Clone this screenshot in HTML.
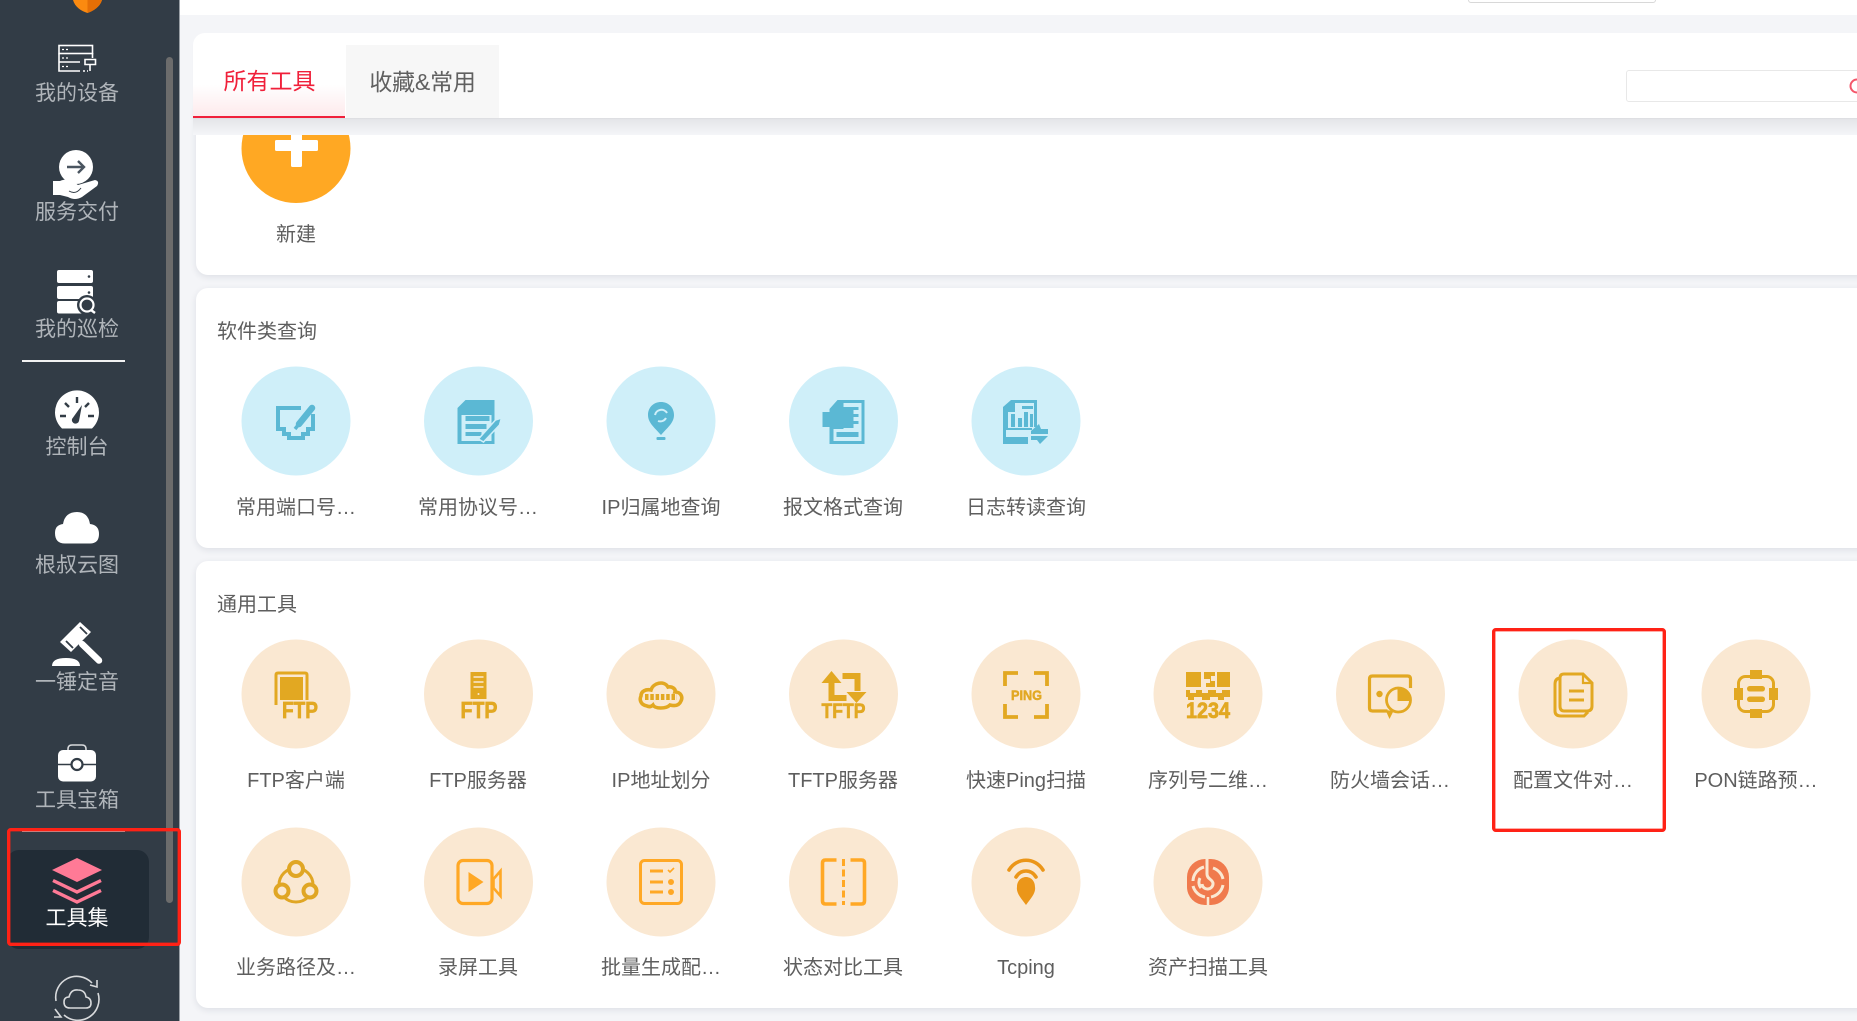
<!DOCTYPE html>
<html lang="zh"><head><meta charset="utf-8"><title>工具集</title>
<style>
html,body{margin:0;padding:0;width:1857px;height:1021px;overflow:hidden;background:#f4f5f8}
body{position:relative;font-family:"Liberation Sans","Noto Sans CJK SC",sans-serif;color:#595959}
div{position:absolute;box-sizing:border-box}
.side{left:0;top:0;width:180px;height:1021px;background:#323c46;border-right:1px solid #9aa0a6}
.card{left:196px;width:1700px;background:#fff;border-radius:12px;box-shadow:0 2px 7px rgba(30,40,70,.10)}
.l{width:182px;text-align:center;font-size:20px;line-height:30px;height:30px;white-space:nowrap;color:#5e5e5e;font-weight:400}
.s{width:150px;left:2px;text-align:center;font-size:21px;line-height:30px;height:30px;color:#b0b5ba;font-weight:400;white-space:nowrap}
.t{font-size:20px;line-height:30px;height:30px;left:217px;color:#5e5e5e;font-weight:400;white-space:nowrap}
svg{position:absolute;left:0;top:0}
svg text{font-family:"Liberation Sans",sans-serif;font-weight:700}
</style></head><body>

<div style="left:180px;top:0;width:1677px;height:15px;background:#fff"></div>
<div style="left:1468px;top:-10px;width:188px;height:13px;background:#fff;border:1px solid #d8d8d8;border-radius:3px"></div>

<!-- cards -->
<div class="card" style="top:100px;height:175px"></div>
<div class="card" style="top:288px;height:260px"></div>
<div class="card" style="top:561px;height:447px"></div>

<!-- tab header -->
<div style="left:193px;top:118px;width:1664px;height:17px;background:linear-gradient(#e3e4e8,#f4f5f8)"></div>
<div style="left:193px;top:33px;width:1700px;height:85px;background:#fff;border-radius:12px 0 0 0;box-shadow:0 1px 1px rgba(0,0,0,.03)"></div>
<div style="left:193px;top:85px;width:152px;height:33px;background:linear-gradient(#fff,#fdeaec);border-bottom:2px solid #f0203a"></div>
<div style="left:346px;top:45px;width:153px;height:73px;background:#f7f7f7"></div>
<div style="left:193px;top:63px;width:153px;text-align:center;font-size:23px;line-height:36px;color:#f0203a;font-weight:400;white-space:nowrap">所有工具</div>
<div style="left:346px;top:64px;width:153px;text-align:center;font-size:23px;line-height:36px;color:#606060;font-weight:400;white-space:nowrap;letter-spacing:-.2px">收藏&amp;常用</div>
<div style="left:1626px;top:70px;width:260px;height:32px;border:1.5px solid #e8e8e8;border-radius:3px;background:#fff"></div>

<div class="side"></div>
<div style="left:166px;top:57px;width:7px;height:846px;background:#6c6c6c;border-radius:4px"></div>
<div style="left:7px;top:850px;width:142px;height:99px;background:#212c36;border-radius:12px"></div>
<div style="left:22px;top:360px;width:103px;height:2px;background:#f2f2f2"></div>
<div style="left:22px;top:831px;width:103px;height:1px;background:#aeb2b6"></div>

<!-- sidebar labels -->
<div class="s" style="top:79px">我的设备</div>
<div class="s" style="top:198px">服务交付</div>
<div class="s" style="top:315px">我的巡检</div>
<div class="s" style="top:433px">控制台</div>
<div class="s" style="top:551px">根叔云图</div>
<div class="s" style="top:668px">一锤定音</div>
<div class="s" style="top:786px">工具宝箱</div>
<div class="s" style="top:904px;color:#fff">工具集</div>

<!-- section titles -->
<div class="t" style="top:317px">软件类查询</div>
<div class="t" style="top:590px">通用工具</div>

<!-- labels -->
<div class="l" style="left:205px;top:220px">新建</div>
<div class="l" style="left:205px;top:493px">常用端口号…</div>
<div class="l" style="left:387px;top:493px">常用协议号…</div>
<div class="l" style="left:570px;top:493px">IP归属地查询</div>
<div class="l" style="left:752px;top:493px">报文格式查询</div>
<div class="l" style="left:935px;top:493px">日志转读查询</div>

<div class="l" style="left:205px;top:766px">FTP客户端</div>
<div class="l" style="left:387px;top:766px">FTP服务器</div>
<div class="l" style="left:570px;top:766px">IP地址划分</div>
<div class="l" style="left:752px;top:766px">TFTP服务器</div>
<div class="l" style="left:935px;top:766px">快速Ping扫描</div>
<div class="l" style="left:1117px;top:766px">序列号二维…</div>
<div class="l" style="left:1299px;top:766px">防火墙会话…</div>
<div class="l" style="left:1482px;top:766px">配置文件对…</div>
<div class="l" style="left:1665px;top:766px">PON链路预…</div>

<div class="l" style="left:205px;top:953px">业务路径及…</div>
<div class="l" style="left:387px;top:953px">录屏工具</div>
<div class="l" style="left:570px;top:953px">批量生成配…</div>
<div class="l" style="left:752px;top:953px">状态对比工具</div>
<div class="l" style="left:935px;top:953px">Tcping</div>
<div class="l" style="left:1117px;top:953px">资产扫描工具</div>

<svg width="1857" height="1021" viewBox="0 0 1857 1021" fill="none">
<!-- search circle -->
<circle cx="1857" cy="86" r="6.5" stroke="#f4566a" stroke-width="2"/>

<!-- new button -->
<clipPath id="cp"><rect x="190" y="135" width="300" height="100"/></clipPath>
<g clip-path="url(#cp)">
<circle cx="296" cy="148.5" r="54.5" fill="#ffa823"/>
<rect x="275" y="140" width="43" height="11" rx="1.5" fill="#fff"/>
<rect x="291" y="125" width="11" height="42" rx="1.5" fill="#fff"/>
</g>

<!-- cyan circles -->
<g fill="#cfeff9">
<circle cx="296" cy="421" r="54.5"/><circle cx="478.5" cy="421" r="54.5"/><circle cx="661" cy="421" r="54.5"/><circle cx="843.5" cy="421" r="54.5"/><circle cx="1026" cy="421" r="54.5"/>
</g>
<!-- peach circles -->
<g fill="#fae8d2">
<circle cx="296" cy="694" r="54.5"/><circle cx="478.5" cy="694" r="54.5"/><circle cx="661" cy="694" r="54.5"/><circle cx="843.5" cy="694" r="54.5"/><circle cx="1026" cy="694" r="54.5"/><circle cx="1208" cy="694" r="54.5"/><circle cx="1390.5" cy="694" r="54.5"/><circle cx="1573" cy="694" r="54.5"/><circle cx="1756" cy="694" r="54.5"/>
<circle cx="296" cy="882" r="54.5"/><circle cx="478.5" cy="882" r="54.5"/><circle cx="661" cy="882" r="54.5"/><circle cx="843.5" cy="882" r="54.5"/><circle cx="1026" cy="882" r="54.5"/><circle cx="1208" cy="882" r="54.5"/>
</g>

<!-- port -->
<g transform="translate(296,421)" stroke="#5bb8d4" fill="none">
<path d="M5 -13 H-18 V8 H-12 V13 H-7 V17 H7 V13 H12 V8 H17 V-7" stroke-width="4"/>
<path d="M3 3 L16 -13" stroke-width="6.5" stroke-linecap="round"/>
<path d="M-1 8 L3 3" stroke-width="3.5"/>
</g>
<!-- protocol doc -->
<g transform="translate(478.5,421)">
<path d="M-21 -13 L-13 -21 H16 V23 H-21 Z" fill="#5bb8d4"/>
<path d="M-17 -6 H13 V20 H-17 Z" fill="#cfeff9"/>
<path d="M-13 -5 H11 V0 H-13 Z M-13 3 H8 V8 H-13 Z M-13 11 H3 V15 H-13 Z" fill="#5bb8d4"/>
<path d="M0 18 L17 -1 L23 -3 L21 4 L5 21 Z" fill="#5bb8d4" stroke="#cfeff9" stroke-width="1.5"/>
</g>
<!-- IP pin -->
<g transform="translate(661,421)">
<path d="M0 14 C-6 7 -13 2 -13 -6 C-13 -14 -7 -19 0 -19 C7 -19 13 -14 13 -6 C13 2 6 7 0 14 Z" fill="#5bb8d4"/>
<path d="M-6 -6 A6.5 6.5 0 0 1 6 -8 M5 -3 A6.5 6.5 0 0 1 -3 0" stroke="#cfeff9" stroke-width="2"/>
<rect x="-4.5" y="16" width="9" height="3" rx="1" fill="#5bb8d4"/>
</g>
<!-- message format -->
<g transform="translate(843.5,421)">
<path d="M-14 -12 L-6 -21 H21 V23 H-14 V6 H-21 V-9 H-14 Z" fill="#5bb8d4"/>
<path d="M0 -18 H18 V20 H-10 V8 H0 Z" fill="#cfeff9"/>
<path d="M-2 -14 H15 V-11 H10 V-7 H15 V-4 H10 V0 H15 V3 H10 V7 H-6 V-2 H-2 Z M-7 11 H15 V16 H-7 Z" fill="#5bb8d4"/>
</g>
<!-- log -->
<g transform="translate(1026,421)">
<path d="M-23 -14 L-15 -21 H11 V6 H6 V9 H-20 V16 H2 V23 H-23 Z" fill="#5bb8d4"/>
<path d="M-18 -9 V7 H8 V-18 H-11 V-9 Z" fill="#cfeff9"/>
<path d="M-4 -15 H7 V-12 H-4 Z M-15 -7 H-11 V6 H-15 Z M-8 -3 H-4 V6 H-8 Z M-2 -9 H2 V6 H-2 Z M4 -7 H7 V6 H4 Z" fill="#5bb8d4"/>
<path d="M5 10 L13 3 L15 8 H22 V13 H5 Z M5 15 H22 L14 23 L11 19 H5 Z" fill="#5bb8d4"/>
</g>

<!-- FTP client -->
<g transform="translate(296,694)" fill="#e2a822">
<path d="M-20 11 V-19 Q-20 -21 -18 -21 H9 Q11 -21 11 -19 V6" stroke="#e2a822" stroke-width="3" fill="none"/>
<rect x="-16" y="-17" width="23" height="23"/>
<rect x="-14" y="6" width="36" height="18" fill="#fae8d2"/>
<text x="-14" y="24" font-size="23" stroke="#e2a822" stroke-width=".7" textLength="36" lengthAdjust="spacingAndGlyphs">FTP</text>
</g>
<!-- FTP server -->
<g transform="translate(478.5,694)" fill="#e2a822">
<rect x="-8" y="-22" width="16" height="27"/>
<path d="M-5 -17 H5 M-5 -12 H5 M-5 -7 H5" stroke="#fae8d2" stroke-width="1.4"/>
<circle cx="0" cy="0" r="1" fill="#fae8d2"/>
<text x="-18" y="24" font-size="23" stroke="#e2a822" stroke-width=".7" textLength="37" lengthAdjust="spacingAndGlyphs">FTP</text>
</g>
<!-- IP cloud -->
<g transform="translate(661,694)">
<path d="M-14 12 C-20 11 -22 6 -20 2 C-20 -3 -15 -5 -10 -4 C-8 -11 3 -14 7 -7 C11 -8 15 -5 14 -2 C20 -2 22 3 20 7 C18 12 13 12 9 11 C5 15 -6 15 -8 11 C-10 13 -12 13 -14 12 Z" stroke="#e2a822" stroke-width="3.6" fill="#fae8d2"/>
<path d="M-16 3 H16" stroke="#e2a822" stroke-width="6" stroke-dasharray="3.5 1.8"/>
</g>
<!-- TFTP -->
<g transform="translate(843.5,694)" fill="#e2a822">
<path d="M-22 -11 L-12 -23 L-2 -11 Z"/>
<path d="M-12 -12 V4 H3 M-1 -18 H14 V-3" stroke="#e2a822" stroke-width="6" fill="none"/>
<path d="M3 -2 H23 L13 9 Z"/>
<text x="-22" y="24" font-size="21" stroke="#e2a822" stroke-width=".6" textLength="44" lengthAdjust="spacingAndGlyphs">TFTP</text>
</g>
<!-- PING -->
<g transform="translate(1026,694)">
<path d="M-8 -21 H-21 V-8 M8 -21 H21 V-8 M-21 10 V23 H-8 M21 10 V23 H8" stroke="#e2a822" stroke-width="3.8" fill="none"/>
<text x="-15" y="6" font-size="14" fill="#e2a822" stroke="#e2a822" stroke-width=".5" textLength="31" lengthAdjust="spacingAndGlyphs">PING</text>
</g>
<!-- QR -->
<g transform="translate(1208,694)" fill="#e2a822">
<rect x="-22" y="-22" width="15" height="15"/><rect x="9" y="-22" width="13" height="15"/>
<path d="M-4 -22 H7 V-18 H3 V-13 H7 V-7 H-2 V-11 H2 V-15 H-4 Z"/>
<path d="M-22 -4 H-18 V-1 H-12 V-4 H-6 V-1 H0 V-4 H8 V-1 H14 V-4 H22 V3 H16 V6 H10 V3 H2 V6 H-6 V3 H-14 V6 H-20 V3 H-22 Z"/>
<text x="-22" y="24" font-size="22" stroke="#e2a822" stroke-width=".8" textLength="44" lengthAdjust="spacingAndGlyphs">1234</text>
</g>
<!-- firewall -->
<g transform="translate(1390.5,694)">
<path d="M-3 17 H-18 Q-21 17 -21 14 V-15 Q-21 -18 -18 -18 H17 Q20 -18 20 -15 V-6" stroke="#e2a822" stroke-width="3.2" fill="none"/>
<path d="M-5 16 L-1 25 L3 17 Z" fill="#e2a822"/>
<circle cx="-11" cy="0" r="3.2" fill="#e2a822"/>
<circle cx="8" cy="6" r="12" fill="#fae8d2" stroke="#e2a822" stroke-width="2.8"/>
<path d="M7 -7 A13 13 0 0 1 21 7 H7 Z" fill="#e2a822"/>
</g>
<!-- config -->
<g transform="translate(1573,694)" stroke="#e2a822" stroke-width="3" fill="none">
<path d="M-12 -16 Q-18 -16 -18 -10 V17 Q-18 22 -12 22 H11 L15 18"/>
<path d="M-9 -20 H10 L19 -11 V12 Q19 17 14 17 H-9 Q-13 17 -13 12 V-16 Q-13 -20 -9 -20 Z" fill="#fae8d2"/>
<path d="M10 -20 V-11 H19" stroke-width="2.2"/>
<path d="M-4 -3 H11 M-4 6 H11"/>
</g>
<!-- PON -->
<g transform="translate(1756,694)" fill="#e2a822">
<rect x="-17.5" y="-17.5" width="35" height="35" rx="7" stroke="#e2a822" stroke-width="3" fill="none"/>
<rect x="-6" y="-24" width="12" height="9"/><rect x="-6" y="15" width="12" height="9"/>
<rect x="-22" y="-6" width="9" height="12"/><rect x="13" y="-6" width="9" height="12"/>
<rect x="-9" y="-8" width="18" height="5.5" rx="2.7"/><rect x="-9" y="2.5" width="18" height="5.5" rx="2.7"/>
</g>

<!-- share -->
<g transform="translate(296,882)" stroke="#e0a624" stroke-width="4" fill="none">
<circle cx="0" cy="3" r="17" stroke-width="3"/>
<circle cx="0" cy="-13" r="7" fill="#fae8d2"/>
<circle cx="-14" cy="9" r="6.5" fill="#fae8d2"/>
<circle cx="14" cy="9" r="6.5" fill="#fae8d2"/>
</g>
<!-- record -->
<g transform="translate(478.5,882)">
<rect x="-20.5" y="-21.5" width="34" height="43" rx="5" stroke="#ffa825" stroke-width="3.2" fill="none"/>
<path d="M-10 -10 L5 0 L-10 10 Z" fill="#ffa825"/>
<path d="M15 -3 L22 -11 V14 L15 6 Z" stroke="#ffa825" stroke-width="2.6" fill="none"/>
</g>
<!-- batch -->
<g transform="translate(661,882)">
<rect x="-20.5" y="-21.5" width="41" height="43" rx="4" stroke="#ffa825" stroke-width="3" fill="none"/>
<path d="M-11 -11 H2 M-11 0 H2 M-11 10 H2" stroke="#ffa825" stroke-width="3"/>
<path d="M7 -12 L9 -10 L13 -14" stroke="#ffa825" stroke-width="1.6" fill="none"/>
<circle cx="10" cy="0" r="3" fill="#ffa825"/><circle cx="10" cy="10" r="3" fill="#ffa825"/>
</g>
<!-- state compare -->
<g transform="translate(843.5,882)" stroke="#ffa825" stroke-width="3.6" fill="none">
<path d="M-7 -22 H-18 Q-21 -22 -21 -19 V19 Q-21 22 -18 22 H-7 M7 -22 H18 Q21 -22 21 -19 V19 Q21 22 18 22 H7"/>
<path d="M0 -23 V23" stroke-width="3" stroke-dasharray="7 3.5"/>
</g>
<!-- tcping -->
<g transform="translate(1026,882)">
<path d="M-17 -12 C-9 -25 9 -25 17 -12 M-10 -5 C-5 -13 5 -13 10 -5" stroke="#eb9619" stroke-width="3.6" fill="none" stroke-linecap="round"/>
<path d="M0 23 C-5 16 -10 11 -9 5 C-9 -2 -4 -5 0 -5 C4 -5 9 -2 9 5 C10 11 5 16 0 23 Z" fill="#eb9619"/>
</g>
<!-- asset -->
<g transform="translate(1208,882)">
<rect x="-21" y="-23" width="42" height="46" rx="18" fill="#f07a4d"/>
<path d="M-4 -15 A15 15 0 0 0 -15 -1 M-15 4 A15 15 0 0 0 -3 15 M3 15 A15 15 0 0 0 15 3 M15 -3 A15 15 0 0 0 5 -14" stroke="#fae8d2" stroke-width="3" fill="none"/>
<path d="M-1 -23 V-8 C-1 -3 4 -3 5 1 A5.5 5.5 0 0 1 -6 2 M-8 -4 A9 9 0 0 0 -7 6" stroke="#fae8d2" stroke-width="3" fill="none"/>
<path d="M0 15 V23" stroke="#fae8d2" stroke-width="2.5"/>
</g>

<!-- SIDEBAR ICONS -->
<path d="M73 0 H102 C100 7 93 11 87.5 13 C81 11 75 7 73 0 Z" fill="#fb8a10"/>
<path d="M87.5 0 V13 C93 11 100 7 102 0 Z" fill="#e56f06"/>
<!-- device -->
<g stroke="#fff" stroke-width="1.6" fill="none">
<rect x="59" y="45.5" width="33.5" height="8"/>
<path d="M59 53.5 V71 H80 M59 62 H80"/>
<path d="M92.5 53 V58"/>
<path d="M85 59.5 H95.5 V64.5 H85 Z M90 64.5 V71"/>
<path d="M83 71 H85 M87 71 H88" />
<path d="M62 49.5 H64 M66 49.5 H68 M62 58 H64 M66 58 H68 M62 66.5 H64 M66 66.5 H68" stroke-width="1.3"/>
</g>
<!-- service -->
<circle cx="76" cy="167" r="17" fill="#fff"/>
<path d="M67 167 H84 M78 161 L84 167 L78 173" stroke="#4a5560" stroke-width="2.4" fill="none"/>
<path d="M53 181 H60 C66 178 72 180 78 185 L95 180 Q100 181 97 186 L82 197 Q75 201 68 197 L60 195 H53 Z" fill="#fff"/>
<path d="M69 191 C74 194 78 192 81 188" stroke="#323c46" stroke-width="1" fill="none"/>
<!-- inspection -->
<rect x="57" y="270" width="36" height="13" rx="2" fill="#fff"/>
<rect x="57" y="286" width="36" height="13" rx="2" fill="#fff"/>
<rect x="57" y="301" width="30" height="12.5" rx="2" fill="#fff"/>
<circle cx="89" cy="276.5" r="1.3" fill="#323c46"/><circle cx="89" cy="292.5" r="1.3" fill="#323c46"/>
<circle cx="87" cy="305" r="10" fill="#323c46"/>
<circle cx="87" cy="305" r="6.5" stroke="#fff" stroke-width="2.2" fill="none"/>
<path d="M91 310 L95 313" stroke="#fff" stroke-width="2.4"/>
<!-- gauge -->
<path d="M62 428.5 A22 22 0 1 1 92 428.5 Z" fill="#fff"/>
<path d="M77 397 V403 M65 403 L69 407 M89 403 L85 407 M60 416 H66 M88 416 H94" stroke="#323c46" stroke-width="2.4"/>
<path d="M82 405 L72 419 A3.6 3.6 0 1 0 79 421 Z" fill="#323c46"/>
<!-- cloud -->
<path d="M65 543.5 Q55 543.5 55 533 Q55 525 63 524 Q65 512 77 512 Q88 512 90 524 Q99 525 99 534 Q99 543.5 90 543.5 Z" fill="#fff"/>
<!-- gavel -->
<path d="M60 642 L80 622 L91 632 L71 652 Z" fill="#fff"/>
<path d="M82 644 L99 660.5" stroke="#fff" stroke-width="6.5" stroke-linecap="round"/>
<path d="M66 641 L73 648 M80 627 L87 634" stroke="#323c46" stroke-width="1.8"/>
<path d="M52 666 Q52 658 66 658 Q80 658 80 666 Z" fill="#fff"/>
<!-- toolbox -->
<path d="M68 751 V749 Q68 745 72 745 H82 Q86 745 86 749 V751" stroke="#d8dadc" stroke-width="1.6" fill="none"/>
<rect x="58" y="750" width="38" height="31.5" rx="5" fill="#fff"/>
<path d="M58 764.5 H96" stroke="#323c46" stroke-width="1.5"/>
<circle cx="77" cy="764.5" r="5.5" fill="#fff" stroke="#323c46" stroke-width="2.2"/>
<!-- layers -->
<path d="M77 858 L102 870 L77 882 L52 870 Z" fill="#ff7a96"/>
<path d="M53 880.5 L77 892 L101 880.5 M53 890.5 L77 902 L101 890.5" stroke="#ff7a96" stroke-width="3.4" fill="none"/>
<!-- sync cloud -->
<g stroke="#d8dadc" stroke-width="1.6" fill="none">
<path d="M56 1001 A21 21 0 0 1 92 983"/>
<path d="M98 993 A21 21 0 0 1 64 1015"/>
<path d="M90 985 L97 987 L97 980 M55 1009 L61 1017 L54 1017"/>
<path d="M70 1008 Q64 1008 64 1002 Q64 997 69 997 Q71 989 78 990 Q85 990 86 997 Q91 998 91 1003 Q91 1008 86 1008 Z"/>
</g>

<!-- red annotation boxes -->
<rect x="8.7" y="829.7" width="170.6" height="114.6" rx="2" stroke="#ff2216" stroke-width="3.4"/>
<rect x="1493.7" y="629.7" width="170.6" height="200.6" rx="2" stroke="#ff2216" stroke-width="3.4"/>
</svg>
</body></html>
